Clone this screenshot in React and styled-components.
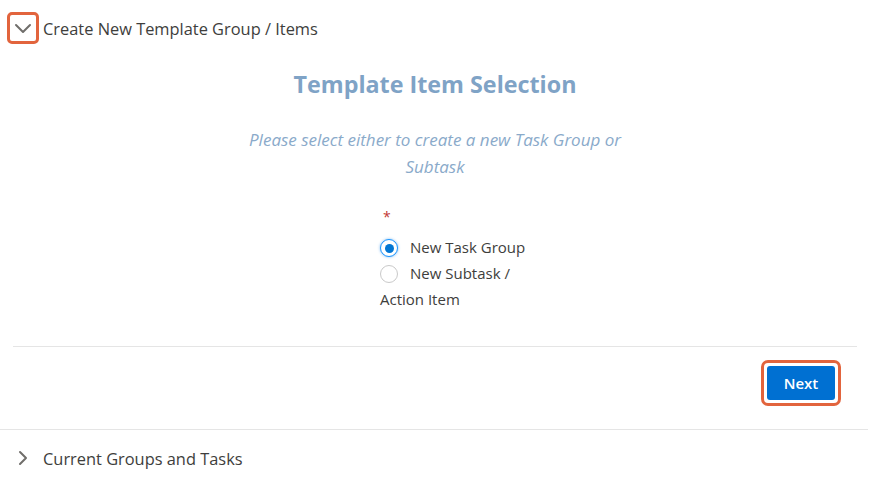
import React, { useState } from 'react';
import styled, { createGlobalStyle } from 'styled-components';

const Global = createGlobalStyle`
  html, body { margin: 0; padding: 0; background: #fff; }
  body { font-family: "Segoe UI", "Open Sans", "Noto Sans", sans-serif; color: #3e3e3c; }
`;

const Page = styled.div`
  width: 870px;
  height: 481px;
  overflow: hidden;
  background: #fff;
`;

const SectionHeader = styled.div`
  display: flex;
  align-items: center;
  gap: 4px;
  height: ${(p) => p.height}px;
  padding-left: ${(p) => p.pad}px;
  font-size: 16.4px;
  color: #3e3e3c;
`;

const ChevronBox = styled.span`
  display: inline-flex;
  align-items: center;
  justify-content: center;
  width: 26px;
  height: 26px;
  border: ${(p) => (p.highlight ? '3px solid #e2643d' : '3px solid transparent')};
  border-radius: 5px;
  color: #706e6b;
`;

const Body = styled.div`
  display: flex;
  flex-direction: column;
  align-items: center;
  padding-top: 12px;
`;

const Title = styled.h2`
  margin: 0;
  font-size: 23.3px;
  font-weight: 700;
  color: #7fa3c6;
  line-height: 32px;
`;

const Subtitle = styled.p`
  margin: 26px 0 0;
  width: 400px;
  text-align: center;
  font-style: italic;
  font-size: 17px;
  line-height: 27px;
  color: #8aaaca;
`;

const Fieldset = styled.div`
  margin-top: 27px;
  width: 152px;
  margin-left: 42px;
  font-size: 15px;
  color: #3e3e3c;
`;

const Required = styled.div`
  color: #c23934;
  font-size: 14px;
  height: 27px;
  padding-left: 3px;
`;

const Option = styled.label`
  display: block;
  line-height: 26px;
  cursor: pointer;
`;

const Dot = styled.span`
  display: inline-block;
  vertical-align: -4px;
  width: 18px;
  height: 18px;
  border-radius: 50%;
  margin-right: 12px;
  box-sizing: border-box;
  border: 1px solid ${(p) => (p.checked ? '#1b96ff' : '#c9c9c9')};
  background: #fff;
  position: relative;
  box-shadow: ${(p) => (p.checked ? '0 0 3px #7fbaf0' : 'none')};
  &::after {
    content: '';
    display: ${(p) => (p.checked ? 'block' : 'none')};
    position: absolute;
    left: 3.5px;
    top: 3.5px;
    width: 9px;
    height: 9px;
    border-radius: 50%;
    background: #0176d3;
  }
`;

const Divider = styled.hr`
  margin: ${(p) => p.margin};
  border: 0;
  border-top: 1px solid #e5e5e5;
`;

const Footer = styled.div`
  display: flex;
  justify-content: flex-end;
  padding: 13px 29px 0 0;
  height: 82px;
  box-sizing: border-box;
`;

const ButtonRing = styled.div`
  padding: 3px;
  border: 3px solid #e2643d;
  border-radius: 7px;
  height: 34px;
`;

const Button = styled.button`
  height: 34px;
  width: 68px;
  border: 0;
  border-radius: 3px;
  background: #0070d2;
  color: #fff;
  font-family: inherit;
  font-size: 15px;
  font-weight: 600;
  cursor: pointer;
`;

const Down = () => (
  <svg width="20" height="20" viewBox="0 0 20 20" fill="none" stroke="currentColor" strokeWidth="2" strokeLinecap="round" strokeLinejoin="round">
    <path d="M3 7l7 7 7-7" />
  </svg>
);

const Right = () => (
  <svg width="20" height="20" viewBox="0 0 20 20" fill="none" stroke="currentColor" strokeWidth="2" strokeLinecap="round" strokeLinejoin="round">
    <path d="M7 4l6 6-6 6" />
  </svg>
);

export default function App() {
  const [choice, setChoice] = useState('group');
  return (
    <Page>
      <Global />
      <SectionHeader height={56} pad={7}>
        <ChevronBox highlight>
          <Down />
        </ChevronBox>
        Create New Template Group / Items
      </SectionHeader>
      <Body>
        <Title>Template Item Selection</Title>
        <Subtitle>Please select either to create a new Task Group or Subtask</Subtitle>
        <Fieldset>
          <Required>*</Required>
          <Option onClick={() => setChoice('group')}>
            <Dot checked={choice === 'group'} />
            New Task Group
          </Option>
          <Option onClick={() => setChoice('subtask')}>
            <Dot checked={choice === 'subtask'} />
            New Subtask / Action Item
          </Option>
        </Fieldset>
      </Body>
      <Divider margin="34px 13px 0" />
      <Footer>
        <ButtonRing>
          <Button>Next</Button>
        </ButtonRing>
      </Footer>
      <Divider margin="0 2px 0 0" />
      <SectionHeader height={56} pad={7}>
        <ChevronBox>
          <Right />
        </ChevronBox>
        Current Groups and Tasks
      </SectionHeader>
    </Page>
  );
}
